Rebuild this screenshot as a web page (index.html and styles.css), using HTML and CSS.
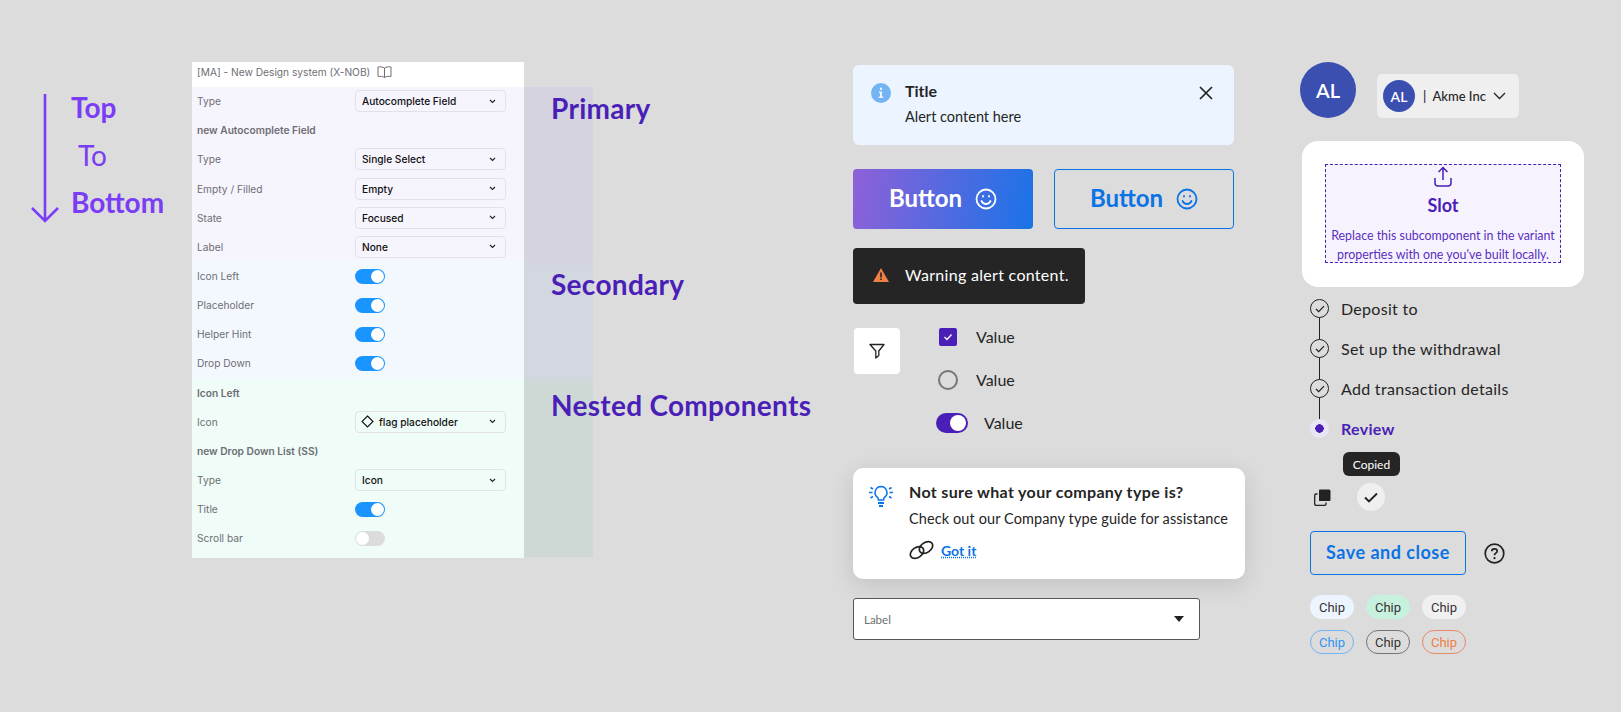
FILE: index.html
```html
<!DOCTYPE html>
<html lang="en">
<head>
    <meta charset="UTF-8">
    <meta name="viewport" content="width=device-width, initial-scale=1.0">
    <title>Design system components</title>
    <link rel="stylesheet" href="styles.css">
</head>
<body>
    <!-- Direction legend -->
    <section class="direction">
        <svg class="arrow" width="30" height="130" viewBox="0 0 30 130" fill="none">
            <path d="M15 0V127M2 114L15 127L28 114" stroke="#7a3df6" stroke-width="2.6"/>
        </svg>
        <div class="direction-words">
            <div class="word">Top</div>
            <div class="word word-light">To</div>
            <div class="word">Bottom</div>
        </div>
    </section>

    <!-- Properties panel -->
    <section class="panel">
        <div class="panel-title">[MA] - New Design system (X-NOB)
            <svg width="15" height="12" viewBox="0 0 15 12" fill="none">
                <path d="M7.5 2C6 .8 3 .6 1 1v9.500c2-.4 5-.2 6.500 1 1.500-1.200 4.500-1.400 6.500-1V1c-2-.4-5-.2-6.500 1zM7.500 2v9.500" stroke="#6f6f6f"/>
            </svg>
        </div>
        <div class="band band-primary">
            <div class="row"><span>Type</span><div class="select">Autocomplete Field<svg class="chev" width="7" height="5" viewBox="0 0 7 5" fill="none"><path d="M1 1l2.500 2.500L6 1" stroke="#222" stroke-width="1.100"/></svg></div></div>
            <div class="row row-head"><span>new Autocomplete Field</span></div>
            <div class="row"><span>Type</span><div class="select">Single Select<svg class="chev" width="7" height="5" viewBox="0 0 7 5" fill="none"><path d="M1 1l2.500 2.500L6 1" stroke="#222" stroke-width="1.100"/></svg></div></div>
            <div class="row"><span>Empty / Filled</span><div class="select">Empty<svg class="chev" width="7" height="5" viewBox="0 0 7 5" fill="none"><path d="M1 1l2.500 2.500L6 1" stroke="#222" stroke-width="1.100"/></svg></div></div>
            <div class="row"><span>State</span><div class="select">Focused<svg class="chev" width="7" height="5" viewBox="0 0 7 5" fill="none"><path d="M1 1l2.500 2.500L6 1" stroke="#222" stroke-width="1.100"/></svg></div></div>
            <div class="row"><span>Label</span><div class="select">None<svg class="chev" width="7" height="5" viewBox="0 0 7 5" fill="none"><path d="M1 1l2.500 2.500L6 1" stroke="#222" stroke-width="1.100"/></svg></div></div>
        </div>
        <div class="band band-secondary">
            <div class="row"><span>Icon Left</span><div class="switch"></div></div>
            <div class="row"><span>Placeholder</span><div class="switch"></div></div>
            <div class="row"><span>Helper Hint</span><div class="switch"></div></div>
            <div class="row"><span>Drop Down</span><div class="switch"></div></div>
        </div>
        <div class="band band-nested">
            <div class="row row-head"><span>Icon Left</span></div>
            <div class="row"><span>Icon</span><div class="select select-icon"><svg width="13" height="13" viewBox="0 0 13 13" fill="none"><path d="M6.500 1L12 6.500 6.500 12 1 6.500z" stroke="#111" stroke-width="1.100"/></svg>flag placeholder<svg class="chev" width="7" height="5" viewBox="0 0 7 5" fill="none"><path d="M1 1l2.500 2.500L6 1" stroke="#222" stroke-width="1.100"/></svg></div></div>
            <div class="row row-head"><span>new Drop Down List (SS)</span></div>
            <div class="row"><span>Type</span><div class="select">Icon<svg class="chev" width="7" height="5" viewBox="0 0 7 5" fill="none"><path d="M1 1l2.500 2.500L6 1" stroke="#222" stroke-width="1.100"/></svg></div></div>
            <div class="row"><span>Title</span><div class="switch"></div></div>
            <div class="row"><span>Scroll bar</span><div class="switch switch-off"></div></div>
        </div>
        <div class="panel-overlay"></div>
    </section>

    <!-- Section names -->
    <section class="labels">
        <div class="label label-primary">Primary</div>
        <div class="label label-secondary">Secondary</div>
        <div class="label label-nested">Nested Components</div>
    </section>

    <!-- Middle components -->
    <section class="middle">
        <div class="alert">
            <svg width="20" height="20" viewBox="0 0 20 20"><circle cx="10" cy="10" r="10" fill="#74b4f2"/><path d="M10 4.500a1.200 1.200 0 1 1 0 2.400 1.200 1.200 0 0 1 0-2.400zM8 8.500h3v5h1.200V15H7.800v-1.500H9V10H8z" fill="#ecf5ff"/></svg>
            <div class="alert-text">
                <div class="alert-title">Title</div>
                <div class="alert-body">Alert content here</div>
            </div>
            <svg class="alert-close" width="14" height="14" viewBox="0 0 14 14" fill="none"><path d="M1 1l12 12M13 1L1 13" stroke="#222" stroke-width="1.700"/></svg>
        </div>

        <div class="buttons">
            <button class="btn btn-fill">Button
                <svg width="22" height="22" viewBox="0 0 22 22" fill="none" stroke="currentColor" stroke-width="1.800"><circle cx="11" cy="11" r="9.500"/><path d="M6.500 13c1 2 2.800 3 4.500 3s3.500-1 4.500-3" stroke-linecap="round"/><path d="M8 8v.6M14 8v.6" stroke-linecap="round"/></svg>
            </button>
            <button class="btn btn-line">Button
                <svg width="22" height="22" viewBox="0 0 22 22" fill="none" stroke="currentColor" stroke-width="1.800"><circle cx="11" cy="11" r="9.500"/><path d="M6.500 13c1 2 2.800 3 4.500 3s3.500-1 4.500-3" stroke-linecap="round"/><path d="M8 8v.6M14 8v.6" stroke-linecap="round"/></svg>
            </button>
        </div>

        <div class="warning">
            <svg width="16" height="14" viewBox="0 0 16 14"><path d="M8 0l8 14H0z" fill="#ee7f45"/><path d="M7.200 4.500h1.600v5H7.200zM7.200 10.500h1.600v1.600H7.200z" fill="#252525"/></svg>
            Warning alert content.
        </div>

        <div class="controls">
            <div class="filter">
                <svg width="16" height="16" viewBox="0 0 16 16" fill="none"><path d="M1 1.500h14L9.800 8v4.500L6.800 15V8z" stroke="#222" stroke-width="1.300" stroke-linejoin="round"/></svg>
            </div>
            <div class="values">
                <div class="value"><span class="check"><svg width="10" height="8" viewBox="0 0 10 8" fill="none"><path d="M1.500 4l2.500 2.500L8.500 1.500" stroke="#fff" stroke-width="1.300"/></svg></span>Value</div>
                <div class="value"><span class="radio"></span>Value</div>
                <div class="value value-toggle"><span class="toggle"></span>Value</div>
            </div>
        </div>

        <div class="tip">
            <svg class="tip-bulb" width="26" height="23" viewBox="0 0 26 23" fill="none" stroke="#0a73e6" stroke-width="1.500">
                <path d="M13 1.500a6 6 0 0 1 3.500 10.800c-.6.600-.9 1.300-.9 2.700h-5.200c0-1.400-.3-2.100-.9-2.700A6 6 0 0 1 13 1.500z"/>
                <path d="M10 18h6M11 21h4" stroke-width="2"/>
                <path d="M1 7.500h3.500M21.500 7.500H25M2.500 2.500l2.500 1.500M23.500 2.500L21 4M2.500 13l2.500-1.500M23.500 13L21 11.500"/>
            </svg>
            <div class="tip-text">
                <div class="tip-title">Not sure what your company type is?</div>
                <div class="tip-body">Check out our Company type guide for assistance</div>
                <div class="tip-action">
                    <svg width="25" height="20" viewBox="0 0 25 20" fill="none" stroke="#222" stroke-width="1.700"><ellipse cx="8" cy="12.500" rx="7.300" ry="5" transform="rotate(-35 8 12.500)"/><ellipse cx="17" cy="7.500" rx="7.300" ry="5" transform="rotate(-35 17 7.500)"/></svg>
                    <a class="tip-link" href="#">Got it</a>
                </div>
            </div>
        </div>

        <div class="field">
            <span>Label</span>
            <svg width="10" height="6" viewBox="0 0 10 6"><path d="M0 0h10L5 6z" fill="#222"/></svg>
        </div>
    </section>

    <!-- Right components -->
    <section class="right">
        <div class="accounts">
            <div class="avatar">AL</div>
            <div class="account">
                <div class="avatar avatar-small">AL</div>
                <span class="account-name">|&nbsp;&nbsp;Akme Inc</span>
                <svg width="13" height="8" viewBox="0 0 13 8" fill="none"><path d="M1 1l5.500 5.500L12 1" stroke="#222" stroke-width="1.300"/></svg>
            </div>
        </div>

        <div class="slot-card">
            <div class="slot">
                <svg width="18" height="21" viewBox="0 0 18 21" fill="none" stroke="#4a1fb8" stroke-width="1.500"><path d="M9 14V1.500M4.500 6L9 1.500 13.500 6"/><path d="M1 12v5a3 3 0 0 0 3 3h10a3 3 0 0 0 3-3v-5"/></svg>
                <div class="slot-title">Slot</div>
                <div class="slot-desc">Replace this subcomponent in the variant properties with one you've built locally.</div>
            </div>
        </div>

        <ol class="steps">
            <li class="step"><span class="step-mark"><svg width="10" height="8" viewBox="0 0 10 8" fill="none"><path d="M1 4l2.700 2.700L9 1.200" stroke="#222" stroke-width="1.200"/></svg></span>Deposit to</li>
            <li class="step"><span class="step-mark"><svg width="10" height="8" viewBox="0 0 10 8" fill="none"><path d="M1 4l2.700 2.700L9 1.200" stroke="#222" stroke-width="1.200"/></svg></span>Set up the withdrawal</li>
            <li class="step"><span class="step-mark"><svg width="10" height="8" viewBox="0 0 10 8" fill="none"><path d="M1 4l2.700 2.700L9 1.200" stroke="#222" stroke-width="1.200"/></svg></span>Add transaction details</li>
            <li class="step step-current"><span class="step-mark"></span>Review</li>
        </ol>

        <div class="tooltip">Copied</div>
        <div class="copy-row">
            <svg width="17" height="17" viewBox="0 0 17 17" fill="none"><path d="M5 1.500a1 1 0 0 1 1-1h9a1.500 1.500 0 0 1 1.500 1.500v9a1 1 0 0 1-1 1H5z" fill="#222"/><path d="M3.500 5H2a1.300 1.300 0 0 0-1.300 1.300V15A1.300 1.300 0 0 0 2 16.300h8.700A1.300 1.300 0 0 0 12 15v-1.500" stroke="#222" stroke-width="1.300"/></svg>
            <div class="copied">
                <svg width="14" height="11" viewBox="0 0 14 11" fill="none"><path d="M1 5.500L5 9.500 13 1.500" stroke="#222" stroke-width="1.900"/></svg>
            </div>
        </div>

        <div class="save-row">
            <button class="save">Save and close</button>
            <svg width="21" height="21" viewBox="0 0 21 21" fill="none"><circle cx="10.500" cy="10.500" r="9.300" stroke="#222" stroke-width="1.700"/><path d="M7.800 8.200c0-1.500 1.200-2.400 2.700-2.400s2.700 1 2.700 2.300c0 2.100-2.700 2.100-2.700 4.200" stroke="#222" stroke-width="1.700"/><circle cx="10.500" cy="15.200" r="1.100" fill="#222"/></svg>
        </div>

        <div class="chips">
            <span class="chip chip-blue">Chip</span>
            <span class="chip chip-green">Chip</span>
            <span class="chip chip-grey">Chip</span>
            <span class="chip chip-line-blue">Chip</span>
            <span class="chip chip-line-dark">Chip</span>
            <span class="chip chip-line-orange">Chip</span>
        </div>
    </section>
</body>
</html>
```

FILE: styles.css
```css
/* General Styles */
* {
    box-sizing: border-box;
}

body {
    font-family: Lato, "Noto Sans", sans-serif;
    background: #dcdcdc;
    color: #252525;
    margin: 0;
    display: flex;
    width: 1621px;
    height: 712px;
    overflow: hidden;
}

svg {
    flex-shrink: 0;
    display: block;
}

/* Direction legend */
.direction {
    width: 192px;
    padding: 94px 0 0 30px;
    display: flex;
    align-items: flex-start;
}

.word {
    font-size: 28px;
    font-weight: 700;
    line-height: 47.500px;
    color: #7a3df6;
}

.direction-words {
    margin: -10px 0 0 11px;
}

.word-light {
    font-weight: 400;
    padding-left: 7px;
}

/* Properties panel */
.panel {
    position: relative;
    width: 332px;
    height: 495px;
    margin-top: 62px;
    font-family: Inter, sans-serif;
    font-size: 10.200px;
    color: #6e6e73;
}

.panel-title {
    height: 24.500px;
    background: #fff;
    display: flex;
    align-items: center;
    gap: 7px;
    padding: 0 0 4px 5px;
}

.band-primary {
    background: #f6f4fd;
}

.band-secondary {
    background: #f3f8ff;
}

.band-nested {
    background: #effcf8;
    height: 179.500px;
}

.row {
    height: 29.170px;
    display: flex;
    align-items: center;
    padding-left: 5px;
}

.row > span {
    width: 158px;
}

.row-head {
    font-weight: 600;
}

.select {
    width: 151px;
    height: 22px;
    border: 1px solid #e3e0ea;
    border-radius: 4px;
    color: #111;
    font-weight: 500;
    display: flex;
    align-items: center;
    padding-left: 6px;
}

.select-icon {
    gap: 5px;
    padding-left: 5px;
}

.chev {
    margin-left: auto;
    margin-right: 9px;
}

.switch {
    position: relative;
    width: 30px;
    height: 15px;
    border-radius: 8px;
    background: #1a94ff;
}

.switch::after {
    content: "";
    position: absolute;
    top: 1px;
    right: 1px;
    width: 13px;
    height: 13px;
    border-radius: 50%;
    background: #fff;
}

.switch-off {
    background: #dcdcdc;
}

.switch-off::after {
    right: auto;
    left: 1px;
}

.panel-overlay {
    position: absolute;
    top: 24.500px;
    left: 332px;
    width: 69px;
    bottom: 0;
    background: linear-gradient(to bottom, #d5d3df 0, #d5d3df 172px, #d3d7df 180px, #d3d7df 288px, #ced9d6 296px);
}

/* Section names */
.labels {
    width: 329px;
    padding: 88px 0 0 27px;
    position: relative;
    color: #4a1fb8;
    font-size: 28px;
    font-weight: 700;
    letter-spacing: 0.3px;
}

.label {
    line-height: 40px;
}

.label-secondary {
    margin-top: 136px;
}

.label-nested {
    margin-top: 81px;
}

/* Middle components */
.middle {
    width: 449px;
    padding-top: 65px;
}

.alert {
    width: 381px;
    height: 80px;
    background: #ecf5ff;
    border-radius: 6px;
    display: flex;
    align-items: flex-start;
    padding: 18px 21px 0 18px;
    gap: 14px;
}

.alert-text {
    flex: 1;
    margin-top: -2px;
}

.alert-title {
    font-size: 16px;
    font-weight: 700;
    line-height: 20px;
}

.alert-body {
    font-size: 14.500px;
    line-height: 20px;
    margin-top: 6px;
}

.alert-close {
    margin-top: 3px;
}

.buttons {
    display: flex;
    gap: 21px;
    margin-top: 24px;
}

.btn {
    width: 180px;
    height: 60px;
    padding: 0 0 3px;
    border-radius: 4px;
    font-family: inherit;
    font-size: 24px;
    font-weight: 700;
    display: flex;
    align-items: center;
    justify-content: center;
    gap: 13px;
}

.btn svg {
    margin-top: 3px;
}

.btn-fill {
    border: none;
    color: #fff;
    background: linear-gradient(100deg, #8f60d8, #1a73e8);
}

.btn-line {
    border: 1.500px solid #0a73e6;
    color: #0a73e6;
    background: transparent;
}

.warning {
    width: 232px;
    height: 56px;
    margin-top: 19px;
    background: #252525;
    color: #fff;
    border-radius: 4px;
    display: flex;
    align-items: center;
    gap: 16px;
    padding: 0 0 3px 20px;
    font-size: 16px;
    letter-spacing: 0.3px;
}

.controls {
    display: flex;
    margin-top: 24px;
}

.filter {
    width: 46px;
    height: 46px;
    margin-left: 1px;
    background: #fff;
    border-radius: 4px;
    display: flex;
    align-items: center;
    justify-content: center;
}

.values {
    margin: -13px 0 0 38px;
    font-size: 16px;
}

.value {
    height: 43px;
    display: flex;
    align-items: center;
    gap: 19px;
}

.check {
    width: 18px;
    height: 18px;
    margin-left: 1px;
    background: #4a1fb8;
    border-radius: 2px;
    display: flex;
    align-items: center;
    justify-content: center;
}

.radio {
    width: 20px;
    height: 20px;
    margin-right: -1px;
    border: 2px solid #757575;
    border-radius: 50%;
}

.toggle {
    position: relative;
    width: 32px;
    height: 20px;
    margin-left: -2px;
    background: #4a1fb8;
    border-radius: 10px;
}

.toggle::after {
    content: "";
    position: absolute;
    top: 2px;
    right: 2px;
    width: 16px;
    height: 16px;
    border-radius: 50%;
    background: #fff;
}

.value-toggle {
    gap: 16px;
}

.tip {
    width: 392px;
    height: 111px;
    margin-top: 24px;
    background: #fff;
    border-radius: 10px;
    box-shadow: 0 6px 24px rgba(0, 0, 0, 0.12);
    display: flex;
    gap: 15px;
    padding: 14px 0 0 15px;
}

.tip-bulb {
    margin-top: 3px;
}

.tip-title {
    font-size: 16px;
    font-weight: 700;
    line-height: 20px;
    letter-spacing: 0.35px;
}

.tip-body {
    font-size: 14.500px;
    line-height: 20px;
    margin-top: 7px;
    letter-spacing: 0.1px;
}

.tip-action {
    display: flex;
    align-items: center;
    gap: 7px;
    margin-top: 11px;
}

.tip-link {
    color: #0a73e6;
    font-size: 14px;
    font-weight: 700;
    text-decoration-style: dotted;
}

.field {
    width: 347px;
    height: 42px;
    margin-top: 19px;
    background: #fff;
    border: 1px solid #555;
    border-radius: 3px;
    display: flex;
    align-items: center;
    justify-content: space-between;
    padding: 0 15px 0 10px;
    font-size: 11.500px;
    color: #6e6e6e;
}

/* Right components */
.right {
    width: 282px;
    padding-top: 62px;
}

.accounts {
    display: flex;
    align-items: flex-end;
    margin-left: -2px;
}

.avatar {
    width: 56px;
    height: 56px;
    border-radius: 50%;
    background: #3a4fb0;
    color: #fff;
    font-size: 20px;
    font-weight: 600;
    display: flex;
    align-items: center;
    justify-content: center;
}

.account {
    width: 142px;
    height: 44px;
    margin-left: 21px;
    background: #efefef;
    border-radius: 5px;
    display: flex;
    align-items: center;
    padding-left: 6px;
    gap: 8px;
}

.avatar-small {
    width: 32px;
    height: 32px;
    font-size: 14px;
}

.account-name {
    font-size: 13px;
    font-weight: 500;
    width: 62px;
    white-space: nowrap;
}

.slot-card {
    height: 146px;
    margin-top: 23px;
    background: #fff;
    border-radius: 16px;
    padding: 23px;
}

.slot {
    height: 99px;
    background: #f6f3fe;
    border: 1px dashed #4a1fb8;
    color: #5a2fc0;
    display: flex;
    flex-direction: column;
    align-items: center;
    text-align: center;
    font-size: 12.400px;
    line-height: 18.500px;
    padding-top: 1px;
}

.slot-title {
    font-size: 18px;
    font-weight: 700;
    line-height: 24px;
    color: #4a1fb8;
    margin-top: 6px;
}

.slot-desc {
    margin-top: 10px;
    white-space: normal;
}

.steps {
    list-style: none;
    margin: 1.500px 0 0 8px;
    padding: 0;
}

.step {
    position: relative;
    height: 40px;
    display: flex;
    align-items: center;
    gap: 12px;
    font-size: 16px;
    letter-spacing: 0.3px;
}

.step-mark {
    position: relative;
    z-index: 1;
    width: 19px;
    height: 19px;
    border: 1.200px solid #222;
    border-radius: 50%;
    display: flex;
    align-items: center;
    justify-content: center;
    background: #dcdcdc;
}

.step:not(:last-child)::after {
    content: "";
    position: absolute;
    left: 9px;
    top: 20px;
    height: 40px;
    width: 1px;
    background: #222;
}

.step-current {
    color: #4a1fb8;
    font-weight: 700;
}

.step-current .step-mark {
    border: none;
    background: radial-gradient(circle, #4a1fb8 0, #4a1fb8 4px, #e8e6f5 4.500px);
}

.tooltip {
    width: 57px;
    height: 24px;
    margin: 3.500px 0 0 41px;
    background: #252525;
    color: #fff;
    border-radius: 6px;
    font-size: 12px;
    display: flex;
    align-items: center;
    justify-content: center;
}

.copy-row {
    display: flex;
    align-items: center;
    gap: 26px;
    margin: 7px 0 0 12px;
}

.copied {
    width: 28px;
    height: 28px;
    border-radius: 50%;
    background: #efefef;
    display: flex;
    align-items: center;
    justify-content: center;
}

.save-row {
    display: flex;
    align-items: center;
    gap: 18px;
    margin: 20px 0 0 8px;
}

.save {
    width: 156px;
    height: 44px;
    padding: 0 0 2px;
    background: transparent;
    border: 1.500px solid #0a73e6;
    border-radius: 4px;
    color: #0a73e6;
    font-family: inherit;
    font-size: 18px;
    font-weight: 700;
    letter-spacing: 0.5px;
}

.chips {
    width: 156px;
    margin: 20px 0 0 8px;
    display: grid;
    grid-template-columns: repeat(3, 44px);
    column-gap: 12px;
    row-gap: 11px;
}

.chip {
    height: 24px;
    border-radius: 12px;
    display: flex;
    align-items: center;
    justify-content: center;
    font-family: "Liberation Sans Narrow", Roboto, sans-serif;
    font-size: 13px;
    color: #333;
}

.chip-blue {
    background: #ecf5ff;
}

.chip-green {
    background: #c8f0df;
}

.chip-grey {
    background: #f0f0f0;
}

.chip-line-blue {
    border: 1px solid #74b4f2;
    color: #2f95f5;
}

.chip-line-dark {
    border: 1px solid #757575;
}

.chip-line-orange {
    border: 1px solid #e8896a;
    color: #ee7f45;
}
```
